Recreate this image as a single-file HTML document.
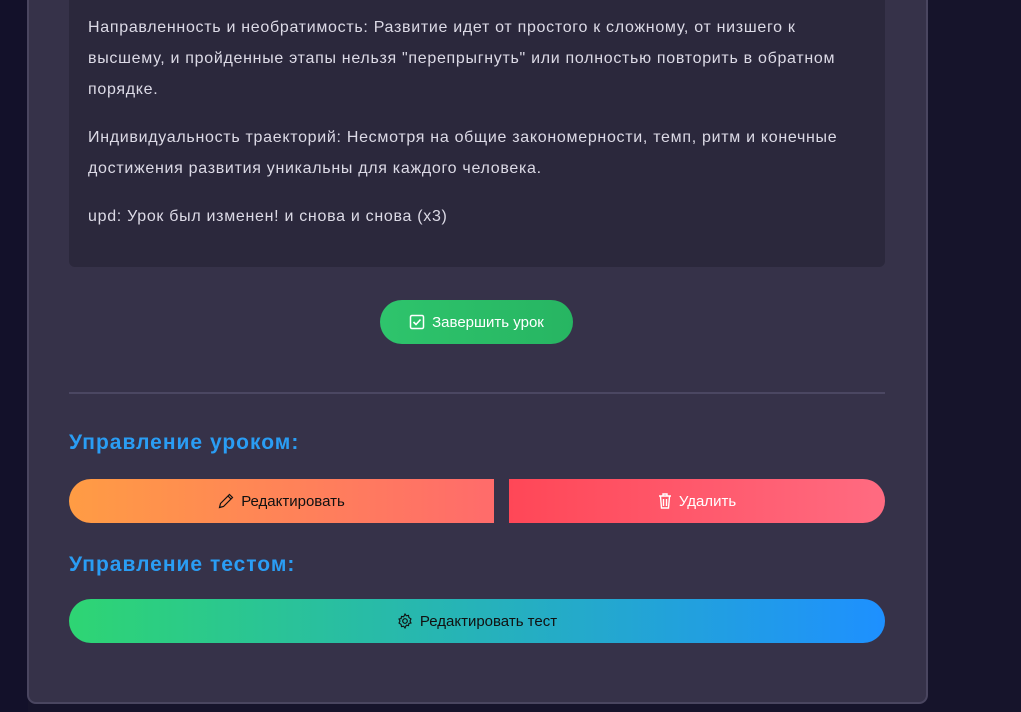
<!DOCTYPE html>
<html><head><meta charset="utf-8"><style>
*{margin:0;padding:0;box-sizing:border-box}
body{width:1021px;height:712px;overflow:hidden;background:#16142b;font-family:"Liberation Sans","DejaVu Sans",sans-serif;position:relative}
.side{position:absolute;left:0;top:0;width:28px;height:712px;background:#13112a}
.card{position:absolute;left:27px;top:-20px;width:901px;height:724px;background:#363249;border:2px solid #4a4660;border-top:none;border-radius:0 0 9px 9px}
.content{position:absolute;left:69px;top:0;width:816px;height:267px;background:#2b283c;border-radius:0 0 6px 6px;padding:0 19px;color:#dcdae6;font-size:16px;line-height:31px;letter-spacing:0.7px}
.content p{position:absolute;left:19px;width:800px;white-space:nowrap}
.btn{position:absolute;display:flex;align-items:center;justify-content:center;gap:7px;font-size:15px}
.done{left:380px;top:300px;width:193px;height:44px;border-radius:22px;background:linear-gradient(90deg,#2ec46c,#27b562);color:#fff}
hr{position:absolute;left:69px;top:392px;width:816px;border:none;border-top:2px solid #4b4762}
h3{position:absolute;left:69px;color:#2a9df4;font-size:21px;font-weight:bold;letter-spacing:1px}
.edit{left:69px;top:479px;width:425px;height:44px;border-radius:22px 0 0 22px;background:linear-gradient(90deg,#ff9c44,#ff6b6b);color:#111}
.del{left:509px;top:479px;width:376px;height:44px;border-radius:0 22px 22px 0;background:linear-gradient(90deg,#ff4757,#ff6b81);color:#fff}
.test{left:69px;top:599px;width:816px;height:44px;border-radius:22px;background:linear-gradient(90deg,#2ed573,#1e90ff);color:#111}
</style></head><body>
<div class="side"></div>
<div class="card"></div>
<div class="content">
<p style="top:12px">Направленность и необратимость: Развитие идет от простого к сложному, от низшего к<br>высшему, и пройденные этапы нельзя "перепрыгнуть" или полностью повторить в обратном<br>порядке.</p>
<p style="top:122px">Индивидуальность траекторий: Несмотря на общие закономерности, темп, ритм и конечные<br>достижения развития уникальны для каждого человека.</p>
<p style="top:201px">upd: Урок был изменен! и снова и снова (x3)</p>
</div>
<div class="btn done"><svg width="16" height="16" viewBox="0 0 16 16"><rect x="1.5" y="1.5" width="13" height="13" rx="1.5" fill="none" stroke="#fff" stroke-width="1.5"/><path d="M4.5 8l2.5 2.5 4.5-5" fill="none" stroke="#fff" stroke-width="1.6"/></svg>Завершить урок</div>
<hr>
<h3 style="top:431px">Управление уроком:</h3>
<div class="btn edit"><svg width="16" height="16" viewBox="0 0 16 16"><path d="M11.5 1.5l3 3-9 9-4 1 1-4z M10 3l3 3" fill="none" stroke="#111" stroke-width="1.2"/></svg>Редактировать</div>
<div class="btn del"><svg width="14" height="16" viewBox="0 0 14 16"><path d="M1 3h12M5 3V1h4v2M2.5 3.5l1 11.5h7l1-11.5M5.5 6v7M8.5 6v7" fill="none" stroke="#fff" stroke-width="1.4"/></svg>Удалить</div>
<h3 style="top:553px">Управление тестом:</h3>
<div class="btn test"><svg width="16" height="16" viewBox="0 0 16 16"><circle cx="8" cy="8" r="2.3" fill="none" stroke="#111" stroke-width="1.2"/><path d="M8 1l1.3 1.8 2.2-.4.4 2.2L14 6l-1 2 1 2-2.1.4-.4 2.2-2.2-.4L8 15l-1.3-1.8-2.2.4-.4-2.2L2 10l1-2-1-2 2.1-.4.4-2.2 2.2.4z" fill="none" stroke="#111" stroke-width="1.1"/></svg>Редактировать тест</div>
</body></html>
